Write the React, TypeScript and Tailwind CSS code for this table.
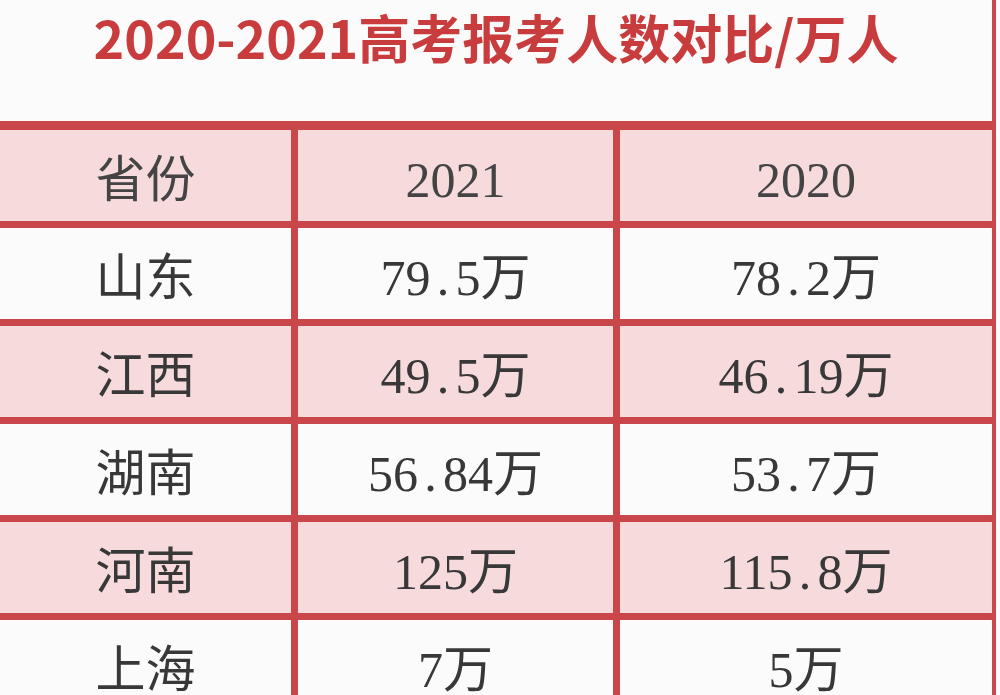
import React from "react";

const rows: { name: string; a: string; b: string; pink: boolean }[] = [
  { name: "山东", a: "79.5万", b: "78.2万", pink: false },
  { name: "江西", a: "49.5万", b: "46.19万", pink: true },
  { name: "湖南", a: "56.84万", b: "53.7万", pink: false },
  { name: "河南", a: "125万", b: "115.8万", pink: true },
  { name: "上海", a: "7万", b: "5万", pink: false },
];

function Num({ text }: { text: string }) {
  const parts = text.split(".");
  if (parts.length === 1) return <>{text}</>;
  return (
    <>
      {parts[0]}
      <span className="inline-block w-[0.5em] text-center">.</span>
      {parts[1]}
    </>
  );
}

const bodyFont = {
  fontFamily: '"Liberation Serif", "Noto Sans CJK SC", serif',
};

function Row({
  cells,
  pink,
  header,
}: {
  cells: React.ReactNode[];
  pink: boolean;
  header?: boolean;
}) {
  const bg = pink ? "bg-[#f6dadc]" : "bg-[#fcfbfb]";
  return (
    <div
      className={`flex h-[98px] border-b-[7px] border-[#c9474a] ${bg} ${
        header ? "text-[#444444]" : "text-[#383838]"
      }`}
    >
      <div className="w-[298px] border-r-[7px] border-[#c9474a] flex items-center justify-center pt-[9px]">
        {cells[0]}
      </div>
      <div className="w-[322px] border-r-[7px] border-[#c9474a] flex items-center justify-center pt-[9px]">
        {cells[1]}
      </div>
      <div className="flex-1 flex items-center justify-center pt-[9px]">
        {cells[2]}
      </div>
    </div>
  );
}

export default function App() {
  return (
    <div className="w-[1000px] h-[695px] overflow-hidden bg-[#fcfbfb]">
      <div className="w-[996px] h-[695px] border-r-4 border-[#c9474a]">
        <div className="h-[121px] flex justify-center pt-[11px]">
          <div
            className="text-[52px] leading-none font-bold text-[#c83c3e] whitespace-nowrap"
            style={{ fontFamily: '"Noto Sans CJK SC", sans-serif' }}
          >
            2020-2021高考报考人数对比/万人
          </div>
        </div>
        <div
          className="border-t-[9px] border-[#c9474a] text-[50px] leading-none"
          style={bodyFont}
        >
          <Row cells={["省份", "2021", "2020"]} pink header />
          {rows.map((r) => (
            <Row
              key={r.name}
              pink={r.pink}
              cells={[r.name, <Num text={r.a} />, <Num text={r.b} />]}
            />
          ))}
        </div>
      </div>
    </div>
  );
}
